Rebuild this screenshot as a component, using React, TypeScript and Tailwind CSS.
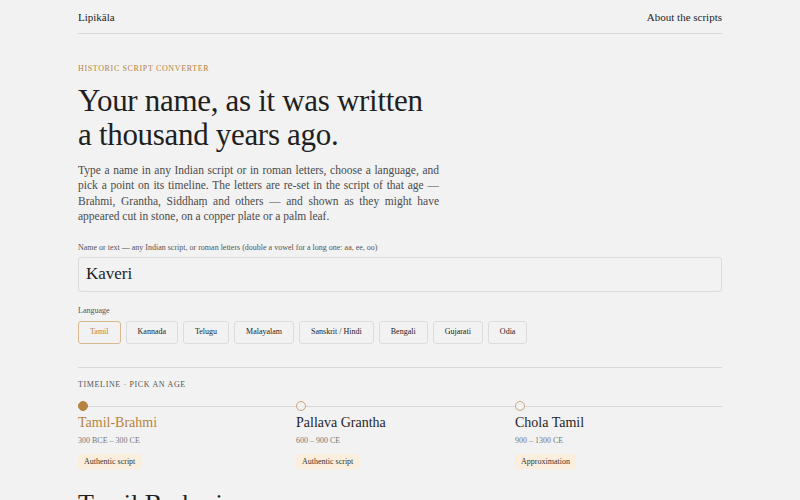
const LANGS = ["Tamil", "Kannada", "Telugu", "Malayalam", "Sanskrit / Hindi", "Bengali", "Gujarati", "Odia"];

const AGES = [
  { name: "Tamil-Brahmi", dates: "300 BCE – 300 CE", badge: "Authentic script", active: true },
  { name: "Pallava Grantha", dates: "600 – 900 CE", badge: "Authentic script", active: false },
  { name: "Chola Tamil", dates: "900 – 1300 CE", badge: "Approximation", active: false },
];

export default function App() {
  return (
    <div className="min-h-screen bg-[#f2f2f2] text-[#1f1f1f] font-['Liberation_Serif',serif]">
      <div className="mx-auto w-[644px]">
        <header className="flex h-[34px] items-center justify-between border-b border-[#d9d9d9] text-[11px] leading-[14px]">
          <span>Lipikāla</span>
          <span>About the scripts</span>
        </header>

        <p className="mt-[29px] text-[8px] leading-[12px] uppercase tracking-[0.08em] text-[#b58440]">
          Historic script converter
        </p>
        <h1 className="mt-[9px] text-[31px] leading-[34px] tracking-[-0.01em]">
          Your name, as it was written
          <br />
          a thousand years ago.
        </h1>
        <p className="mt-[11px] w-[361px] text-justify text-[11.5px] leading-[15.4px] text-[#4a4a4a]">
          Type a name in any Indian script or in roman letters, choose a language, and pick a point on its timeline. The
          letters are re-set in the script of that age — Brahmi, Grantha, Siddhaṃ and others — and shown as they might
          have appeared cut in stone, on a copper plate or a palm leaf.
        </p>

        <label className="mt-[17px] block text-[8px] leading-[12px] text-[#555]">
          Name or text — any Indian script, or roman letters (double a vowel for a long one: aa, ee, oo)
        </label>
        <div className="mt-[3px] flex h-[35px] items-center rounded-[3px] border border-[#dcdcdc] bg-[#f2f2f2] px-[7px] text-[17px]">
          Kaveri
        </div>

        <p className="mt-[13px] text-[8px] leading-[12px] text-[#555]">Language</p>
        <div className="mt-[4px] flex gap-[5px]">
          {LANGS.map((l, i) => (
            <button
              key={l}
              type="button"
              className={`h-[23px] rounded-[3px] border px-[11px] text-[8px] ${
                i === 0 ? "border-[#d8b98e] text-[#b58440]" : "border-[#dcdcdc] text-[#222]"
              }`}
            >
              {l}
            </button>
          ))}
        </div>

        <div className="mt-[23px] border-t border-[#d9d9d9]" />
        <p className="mt-[11px] text-[8px] leading-[12px] uppercase tracking-[0.08em] text-[#555]">
          Timeline · pick an age
        </p>

        <div className="relative mt-[10px]">
          <div className="absolute left-0 right-0 top-[5px] border-t border-[#d6d6d6]" />
          <div className="grid grid-cols-[218px_219px_1fr]">
            {AGES.map((a) => (
              <div key={a.name} className="relative">
                <div
                  className={`h-[10px] w-[10px] rounded-full border ${
                    a.active ? "border-[#b58440] bg-[#b58440]" : "border-[#c9a57a] bg-[#f2f2f2]"
                  }`}
                />
                <p className={`mt-[3px] text-[14px] leading-[18px] ${a.active ? "text-[#b58440]" : "text-[#1f1f1f]"}`}>
                  {a.name}
                </p>
                <p className="mt-[3px] text-[8px] leading-[12px] text-[#777]">{a.dates}</p>
                <span className="mt-[4px] inline-block rounded-[2px] bg-[#fbeedc] px-[6px] py-[2px] text-[8px] leading-[11px] text-[#333]">
                  {a.badge}
                </span>
              </div>
            ))}
          </div>
        </div>

        <h2 className="mt-[17px] text-[26px] leading-[32px]">Tamil Brahmi</h2>
      </div>
    </div>
  );
}
